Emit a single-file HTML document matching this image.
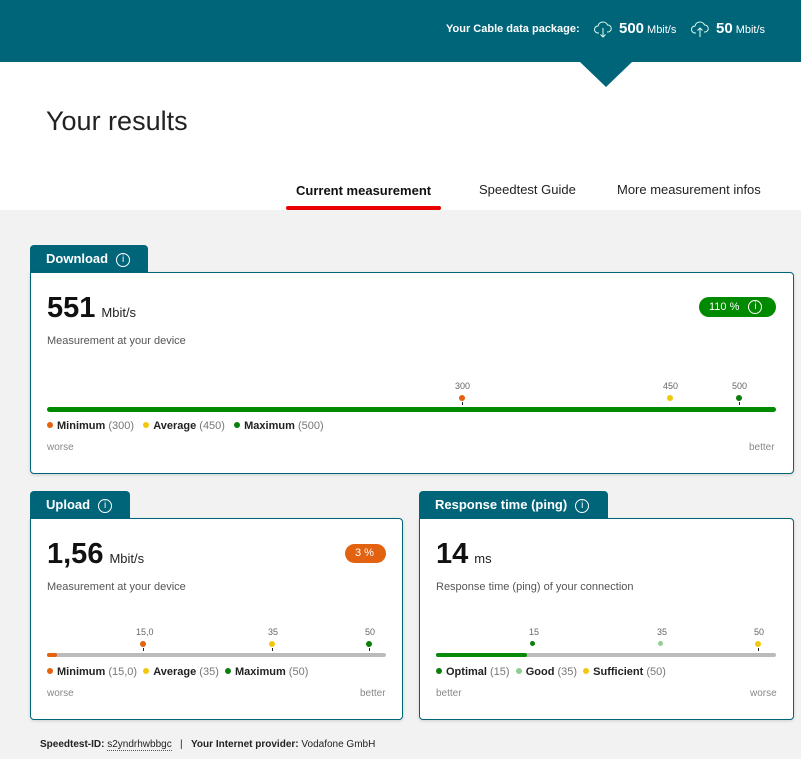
<!DOCTYPE html>
<html><head><meta charset="utf-8"><style>
*{margin:0;padding:0;box-sizing:border-box}
body{width:801px;height:759px;overflow:hidden;background:#f2f2f2;font-family:"Liberation Sans",sans-serif;position:relative;color:#333}
.a{position:absolute;white-space:nowrap}
.hdr{left:0;top:0;width:801px;height:62px;background:#006579}
.white{left:0;top:62px;width:801px;height:148px;background:#fff}
.tri{left:580px;top:62px;width:0;height:0;border-left:26px solid transparent;border-right:26px solid transparent;border-top:25px solid #006579}
.tab{background:#006579;color:#fff;font-weight:bold;font-size:13px;border-radius:4px 4px 0 0;padding:6px 0 0 16px}
.card{background:#fff;border:1px solid #006579;border-radius:0 4px 4px 4px;box-shadow:0 1px 3px rgba(0,0,0,.15)}
.info{display:inline-block;width:14px;height:14px;border:1px solid #fff;border-radius:50%;font-size:10px;text-align:center;line-height:12px;font-weight:normal;margin-left:8px;vertical-align:1px}
.big{font-size:29px;font-weight:bold;color:#111}
.unit{font-size:13px;color:#222;font-weight:normal;margin-left:6px}
.sm{font-size:11px;color:#555}
.dot{width:6px;height:6px;border-radius:50%}
.tick{width:0;height:8px;border-left:1px dashed #222}
.leg{font-size:11px;color:#222}
.leg b{color:#222}
.leg span.g{color:#777}
.ld{display:inline-block;width:6px;height:6px;border-radius:50%;margin-right:4px;vertical-align:1px}
.tiny{font-size:9px;color:#666}
.lbl{font-size:10px;color:#888}
</style></head><body>
<div class="a hdr"></div>
<div class="a white"></div>
<div class="a tri"></div>
<div class="a" style="left:446px;top:23px;color:#fff;font-size:11px;font-weight:bold">Your Cable data package:</div>
<svg class="a" style="left:594px;top:20px" width="18" height="18" viewBox="0 0 18 18" fill="none" stroke="#dfe" stroke-width="1"><path d="M5 13H4a3.5 3.5 0 0 1 0-7 5 5 0 0 1 9.5-1 3.5 3.5 0 0 1 .5 7h-1"/><path d="M9 8v9M6.5 14.5 9 17l2.5-2.5"/></svg>
<div class="a" style="left:619px;top:20px;color:#fff;font-size:15px;font-weight:bold">500<span style="font-size:11px;font-weight:normal;margin-left:3px">Mbit/s</span></div>
<svg class="a" style="left:691px;top:20px" width="18" height="18" viewBox="0 0 18 18" fill="none" stroke="#dfe" stroke-width="1"><path d="M5 13H4a3.5 3.5 0 0 1 0-7 5 5 0 0 1 9.5-1 3.5 3.5 0 0 1 .5 7h-1"/><path d="M9 17V8M6.5 10.5 9 8l2.5 2.5"/></svg>
<div class="a" style="left:716px;top:20px;color:#fff;font-size:15px;font-weight:bold">50<span style="font-size:11px;font-weight:normal;margin-left:3px">Mbit/s</span></div>
<div class="a" style="left:46px;top:106px;font-size:27px;color:#222">Your results</div>
<div class="a" style="left:296px;top:183px;font-size:13px;font-weight:bold;color:#111">Current measurement</div>
<div class="a" style="left:286px;top:206px;width:155px;height:4px;background:#e60000;border-radius:2px"></div>
<div class="a" style="left:479px;top:182px;font-size:13px;color:#222">Speedtest Guide</div>
<div class="a" style="left:617px;top:182px;font-size:13px;color:#222">More measurement infos</div>

<div class="a tab" style="left:30px;top:245px;width:118px;height:28px">Download<span class="info">i</span></div>
<div class="a card" style="left:30px;top:272px;width:764px;height:202px"></div>
<div class="a big" style="left:47px;top:292px">551<span class="unit">Mbit/s</span></div>
<div class="a sm" style="left:47px;top:335px">Measurement at your device</div>
<div class="a" style="left:699px;top:297px;width:77px;height:20px;background:#008a00;border-radius:10px;color:#fff;font-size:11px;padding:3px 0 0 10px">110 % <span class="info" style="margin-left:6px">i</span></div>
<div class="a tiny" style="left:455px;top:381px">300</div>
<div class="a tiny" style="left:663px;top:381px">450</div>
<div class="a tiny" style="left:732px;top:381px">500</div>
<div class="a dot" style="left:459px;top:395px;background:#e2620f"></div>
<div class="a dot" style="left:667px;top:395px;background:#f2c80f"></div>
<div class="a dot" style="left:736px;top:395px;background:#0a7f0a"></div>
<div class="a tick" style="left:462px;top:402px"></div><div class="a tick" style="left:739px;top:402px"></div>
<div class="a" style="left:47px;top:407px;width:729px;height:5px;background:#008a00;border-radius:3px"></div>
<div class="a leg" style="left:47px;top:420px"><span class="ld" style="background:#e2620f"></span><b>Minimum</b> <span class="g">(300)</span>&nbsp;&nbsp;&nbsp;<span class="ld" style="background:#f2c80f"></span><b>Average</b> <span class="g">(450)</span>&nbsp;&nbsp;&nbsp;<span class="ld" style="background:#0a7f0a"></span><b>Maximum</b> <span class="g">(500)</span></div>
<div class="a lbl" style="left:47px;top:442px">worse</div>
<div class="a lbl" style="left:749px;top:442px">better</div>

<div class="a tab" style="left:30px;top:491px;width:100px;height:28px">Upload<span class="info">i</span></div>
<div class="a card" style="left:30px;top:518px;width:373px;height:202px"></div>
<div class="a big" style="left:47px;top:538px">1,56<span class="unit">Mbit/s</span></div>
<div class="a sm" style="left:47px;top:581px">Measurement at your device</div>
<div class="a" style="left:345px;top:544px;width:41px;height:19px;background:#e2620f;border-radius:10px;color:#fff;font-size:11px;padding:3px 0 0 10px">3 %</div>
<div class="a tiny" style="left:136px;top:627px">15,0</div>
<div class="a tiny" style="left:268px;top:627px">35</div>
<div class="a tiny" style="left:365px;top:627px">50</div>
<div class="a dot" style="left:140px;top:641px;background:#e2620f"></div>
<div class="a dot" style="left:269px;top:641px;background:#f2c80f"></div>
<div class="a dot" style="left:366px;top:641px;background:#0a7f0a"></div>
<div class="a tick" style="left:143px;top:648px"></div><div class="a tick" style="left:272px;top:648px"></div><div class="a tick" style="left:369px;top:648px"></div>
<div class="a" style="left:47px;top:653px;width:339px;height:4px;background:#bbb;border-radius:2px"></div>
<div class="a" style="left:47px;top:653px;width:10px;height:4px;background:#e2620f;border-radius:2px"></div>
<div class="a leg" style="left:47px;top:666px"><span class="ld" style="background:#e2620f"></span><b>Minimum</b> <span class="g">(15,0)</span>&nbsp;&nbsp;<span class="ld" style="background:#f2c80f"></span><b>Average</b> <span class="g">(35)</span>&nbsp;&nbsp;<span class="ld" style="background:#0a7f0a"></span><b>Maximum</b> <span class="g">(50)</span></div>
<div class="a lbl" style="left:47px;top:688px">worse</div>
<div class="a lbl" style="left:360px;top:688px">better</div>

<div class="a tab" style="left:419px;top:491px;width:189px;height:28px">Response time (ping)<span class="info">i</span></div>
<div class="a card" style="left:419px;top:518px;width:375px;height:202px"></div>
<div class="a big" style="left:436px;top:538px">14<span class="unit">ms</span></div>
<div class="a sm" style="left:436px;top:581px">Response time (ping) of your connection</div>
<div class="a tiny" style="left:529px;top:627px">15</div>
<div class="a tiny" style="left:657px;top:627px">35</div>
<div class="a tiny" style="left:754px;top:627px">50</div>
<div class="a dot" style="left:530px;top:641px;background:#0a7f0a;width:5px;height:5px"></div>
<div class="a dot" style="left:658px;top:641px;background:#8fcf8f;width:5px;height:5px"></div>
<div class="a dot" style="left:755px;top:641px;background:#f2c80f"></div>
<div class="a tick" style="left:758px;top:648px"></div>
<div class="a" style="left:436px;top:653px;width:340px;height:4px;background:#bbb;border-radius:2px"></div>
<div class="a" style="left:436px;top:653px;width:91px;height:4px;background:#0a8a0a;border-radius:2px"></div>
<div class="a leg" style="left:436px;top:666px"><span class="ld" style="background:#0a7f0a"></span><b>Optimal</b> <span class="g">(15)</span>&nbsp;&nbsp;<span class="ld" style="background:#8fcf8f"></span><b>Good</b> <span class="g">(35)</span>&nbsp;&nbsp;<span class="ld" style="background:#f2c80f"></span><b>Sufficient</b> <span class="g">(50)</span></div>
<div class="a lbl" style="left:436px;top:688px">better</div>
<div class="a lbl" style="left:750px;top:688px">worse</div>

<div class="a" style="left:40px;top:739px;font-size:10px;color:#222"><b>Speedtest-ID:</b> <span style="border-bottom:1px dotted #555">s2yndrhwbbgc</span> &nbsp;&nbsp;|&nbsp;&nbsp; <b>Your Internet provider:</b> Vodafone GmbH</div>
</body></html>
